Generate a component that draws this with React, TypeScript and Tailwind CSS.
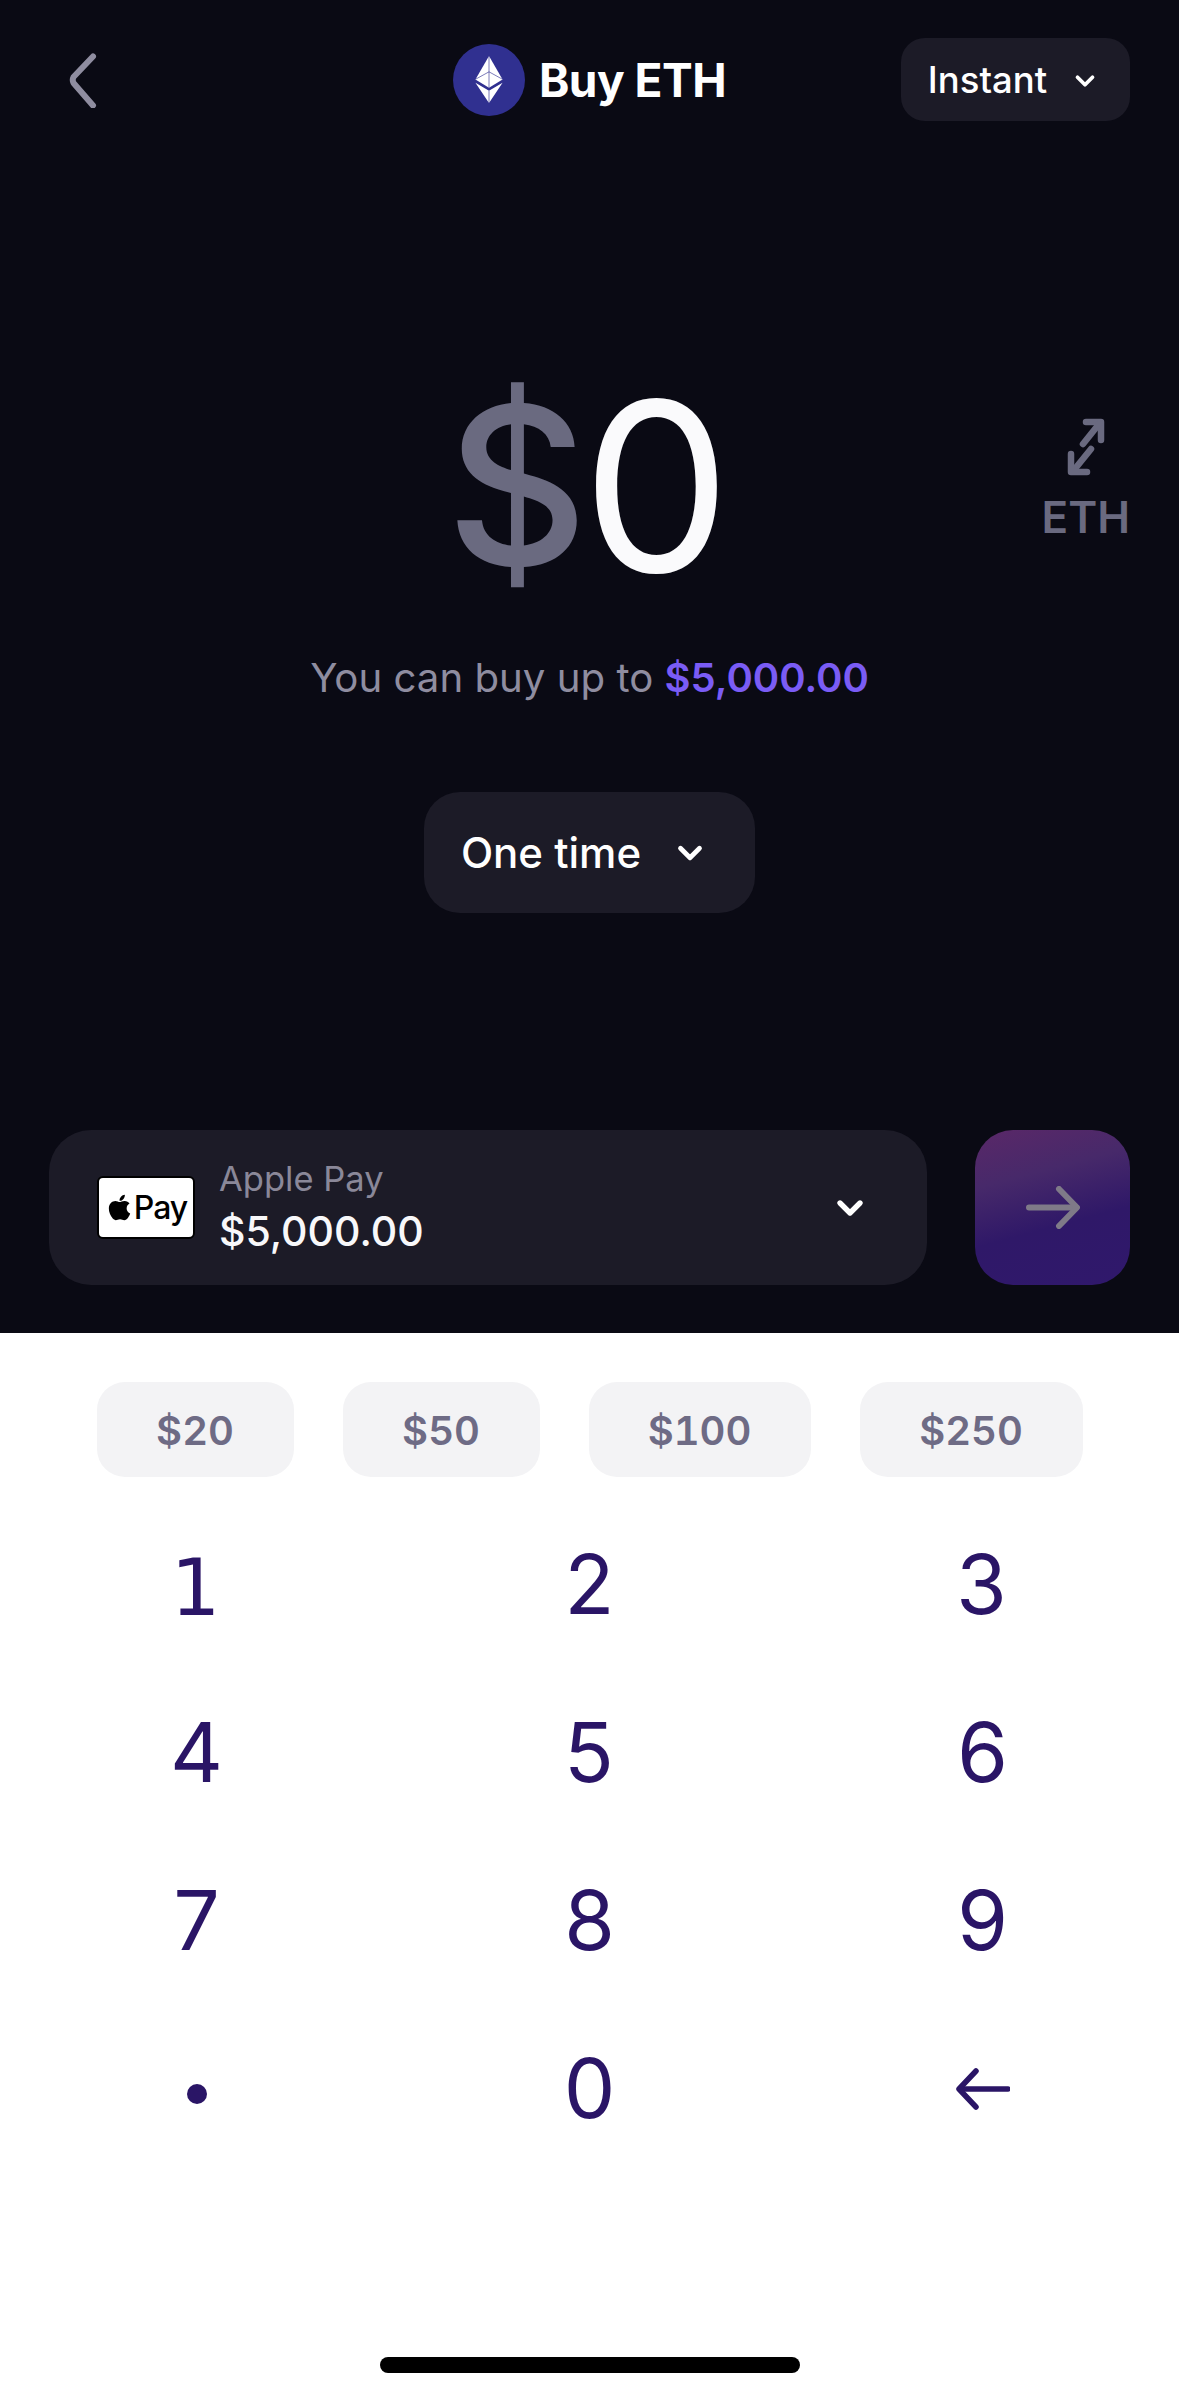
import { ChevronDown } from 'lucide-react'
import { FaApple } from 'react-icons/fa'

const chips = [
  { label: '$20', width: 'w-[197px]' },
  { label: '$50', width: 'w-[197px]' },
  { label: '$100', width: 'w-[222px]' },
  { label: '$250', width: 'w-[223px]' },
]

const keys = ['1', '2', '3', '4', '5', '6', '7', '8', '9']

function EthLogo() {
  return (
    <div className="flex h-[72px] w-[72px] items-center justify-center rounded-full bg-[#303090]">
      <svg width="30" height="47" viewBox="0 0 32 52">
        <path d="M16 0 L31 26 L16 35 L1 26 Z" fill="#ffffff" />
        <path d="M1 29.5 L16 38.5 L31 29.5 L16 52 Z" fill="#ffffff" />
        <path d="M1.5 25.5 L16 17.5 L30.5 25.5 M16 0 V35 M16 38.5 V52" stroke="#303090" strokeWidth="1" fill="none" opacity="0.7" />
      </svg>
    </div>
  )
}

function SwapIcon() {
  return (
    <svg width="38" height="58" viewBox="0 0 38 58" fill="none" stroke="#6a6a80" strokeWidth="6.5" strokeLinecap="round" strokeLinejoin="round">
      <path d="M19 4 H34 V22" />
      <path d="M32 6 L16 26" />
      <path d="M24 31 L7 52" />
      <path d="M4 36 V54 H20" />
    </svg>
  )
}

export default function App() {
  return (
    <div className="flex h-screen w-full flex-col bg-white font-['Inter',sans-serif]">
      {/* Dark top part */}
      <div className="flex h-[1333px] flex-col bg-[#0a0a14] px-[49px]">
        <header className="mt-[38px] grid h-[83px] grid-cols-[1fr_auto_1fr] items-center">
          <svg width="34" height="56" viewBox="0 0 34 56" fill="none" className="ml-[17px]">
            <path d="M27 4.5 L7.5 25 Q6 28 7.5 31 L27 53.5" stroke="#8f8da0" strokeWidth="6" strokeLinecap="round" strokeLinejoin="round" />
          </svg>
          <div className="flex items-center gap-[14px]">
            <EthLogo />
            <span className="text-[46px] leading-none font-bold tracking-[-0.5px] text-white">Buy ETH</span>
          </div>
          <button className="flex h-[83px] w-[229px] items-center justify-center gap-[23px] justify-self-end rounded-[24px] bg-[#1c1b27] pt-[2px] pr-[3px] text-[36.5px] font-medium text-white">
            Instant
            <ChevronDown size={30} strokeWidth={3} />
          </button>
        </header>

        <div className="mt-[233px] grid h-[264px] grid-cols-[1fr_auto_1fr] items-center">
          <div />
          <div className="mr-[8px] flex h-[264px] items-baseline text-[236px] leading-[264px] font-normal tracking-[-6px]">
            <span className="-translate-y-[7px] text-[220px] font-[450] text-[#6a6a80]">$</span>
            <span className="text-[#fafafc]">0</span>
          </div>
          <div className="mb-[16px] flex flex-col items-center gap-[19px] justify-self-end">
            <SwapIcon />
            <span className="text-[44px] leading-[44px] font-semibold text-[#6a6a80]">ETH</span>
          </div>
        </div>

        <p className="mt-[36px] text-center text-[40.2px] leading-[48px] text-[#8f8da0]">
          You can buy up to <span className="text-[40px] font-semibold text-[#7a5cf5]">$5,000.00</span>
        </p>

        <button className="mx-auto mt-[90px] flex h-[121px] w-[331px] items-center justify-center gap-[30px] rounded-[36px] bg-[#1c1b27] pr-[9px] text-[42px] font-medium text-white">
          One time
          <ChevronDown size={38} strokeWidth={3} />
        </button>

        <div className="mt-[217px] flex gap-[48px]">
          <div className="flex h-[155px] w-[879px] items-center rounded-[42px] bg-[#1c1b27] pr-[57px] pl-[48px]">
            <div className="flex h-[63px] w-[98px] items-center justify-center rounded-[6px] border-2 border-black bg-white text-[32px] font-medium text-black">
              <FaApple size={29} />
              <span className="tracking-[-1px]">Pay</span>
            </div>
            <div className="ml-[24px] flex flex-1 flex-col">
              <span className="text-[34.5px] leading-[46px] text-[#8a8899]">Apple Pay</span>
              <span className="text-[41px] leading-[58px] font-medium text-[#f8f8fa]">$5,000.00</span>
            </div>
            <ChevronDown size={40} strokeWidth={3.2} className="text-white" />
          </div>
          <button className="flex h-[155px] w-[155px] items-center justify-center rounded-[38px] bg-[linear-gradient(165deg,#5a2868_0%,#47296a_30%,#2f1868_60%,#30186c_100%)]">
            <svg width="54" height="43" viewBox="0 0 54 43" fill="none" stroke="#7f7a88" strokeWidth="6" strokeLinecap="round" strokeLinejoin="round">
              <path d="M3 21.5 H50" />
              <path d="M33 3 L51 21.5 L33 40" />
            </svg>
          </button>
        </div>
      </div>

      {/* Quick amounts */}
      <div className="mt-[49px] flex justify-center gap-[49px]">
        {chips.map((chip) => (
          <button
            key={chip.label}
            className={`flex h-[95px] items-center justify-center rounded-[28px] bg-[#f3f3f5] pt-[2px] text-[40px] font-semibold text-[#6e6b85] tabular-nums ${chip.width}`}
          >
            {chip.label}
          </button>
        ))}
      </div>

      {/* Keypad */}
      <div className="mt-[24px] grid grid-cols-3 text-[82px] leading-none text-[#2a1566] tabular-nums">
        {keys.map((key) => (
          <div
            key={key}
            className={key === '1' ? "flex h-[168px] items-center justify-center pt-[6px] pr-[2px] font-['DejaVu_Sans',sans-serif] text-[78px]" : 'flex h-[168px] items-center justify-center'}
          >
            {key}
          </div>
        ))}
        <div className="flex h-[168px] items-center justify-center">
          <div className="mt-[10px] h-[20px] w-[20px] rounded-full bg-[#2a1566]" />
        </div>
        <div className="flex h-[168px] items-center justify-center">0</div>
        <div className="flex h-[168px] items-center justify-center">
          <svg width="54" height="42" viewBox="0 0 54 42" fill="none" stroke="#2a1566" strokeWidth="5.5" strokeLinecap="round" strokeLinejoin="round">
            <path d="M52 21 H4" />
            <path d="M20 3 L3 21 L20 39" />
          </svg>
        </div>
      </div>

      <div className="mt-auto mb-[23px] h-[16px] w-[420px] self-center rounded-full bg-black" />
    </div>
  )
}
